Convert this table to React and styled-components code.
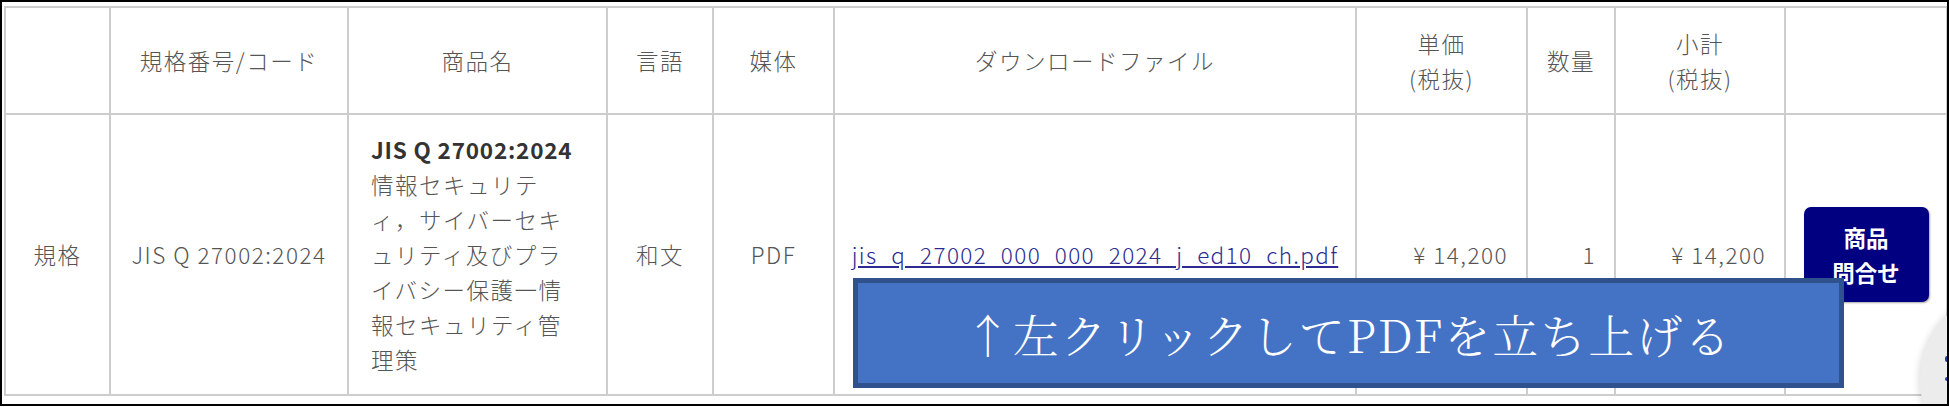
import React from "react";
import styled, { createGlobalStyle } from "styled-components";

const Global = createGlobalStyle`
  html, body { margin: 0; padding: 0; background: #fff; }
  body { font-family: "Noto Sans CJK JP", "Noto Sans", sans-serif; }
`;

const Frame = styled.div`
  position: relative;
  width: 1949px;
  height: 406px;
  box-sizing: border-box;
  border: 2px solid #000;
  padding: 4px 0 0 2px;
  overflow: hidden;
  background: #fff;
`;

const Table = styled.table`
  width: 1944px;
  border-collapse: collapse;
  table-layout: fixed;
  border: 2px solid #cdcdcd;
  font-family: "Noto Sans CJK JP", "Noto Sans", sans-serif;
  font-size: 22.5px;
  line-height: 35px;
  letter-spacing: 1.5px;
  color: #555;
`;

const Th = styled.th`
  height: 105px;
  padding: 0 18px;
  font-weight: 300;
  text-align: center;
  vertical-align: middle;
  border: 2px solid #cdcdcd;
`;

const Td = styled.td`
  padding: 17px ${(p) => (p.$pad ?? 18)}px;
  font-weight: 300;
  text-align: ${(p) => p.$align || "center"};
  vertical-align: middle;
  border: 2px solid #cdcdcd;
  line-break: normal;
`;

const Title = styled.div`
  font-weight: 700;
  color: #333;
  letter-spacing: 0.8px;
`;

const Desc = styled.div`
  line-break: normal;
`;

const FileLink = styled.a`
  color: #2b2b91;
  text-decoration: underline;
  white-space: nowrap;
  letter-spacing: 1.35px;
`;

const InquiryButton = styled.button`
  display: block;
  margin: 0 auto;
  width: 125px;
  height: 95px;
  padding: 0;
  border: none;
  border-radius: 7px;
  background: #000080;
  color: #fff;
  font-family: "Noto Sans CJK JP", "Noto Sans", sans-serif;
  font-size: 22.5px;
  line-height: 35px;
  font-weight: 700;
  box-shadow: 1px 1px 2px rgba(0, 0, 0, 0.35);
`;

const Callout = styled.div`
  position: absolute;
  left: 851px;
  top: 276px;
  width: 991px;
  height: 110px;
  box-sizing: border-box;
  background: #4472c4;
  border: 5px solid #2f528f;
  display: flex;
  align-items: center;
  justify-content: center;
  color: #fff;
  font-family: "Noto Serif CJK JP", "Liberation Serif", "Noto Sans CJK JP", serif;
  font-size: 46px;
  font-weight: 300;
  letter-spacing: 2px;
  z-index: 2;
`;

const FloatCircle = styled.div`
  position: absolute;
  left: 1918px;
  top: 288px;
  width: 180px;
  height: 180px;
  border-radius: 50%;
  background: #ececec;
  box-shadow: -2px 0 6px rgba(0, 0, 0, 0.12);
  z-index: 3;
`;

const Dot = styled.span`
  position: absolute;
  left: 25px;
  top: ${(p) => p.$top}px;
  width: 4px;
  height: ${(p) => p.$h}px;
  border-radius: 2px;
  background: #1f3f9a;
`;

const cols = [105, 238, 259, 106, 121, 522, 171, 88, 170, 162];

export default function App() {
  return (
    <>
      <Global />
      <Frame>
        <Table>
          <colgroup>
            {cols.map((w, i) => (
              <col key={i} style={{ width: w }} />
            ))}
          </colgroup>
          <thead>
            <tr>
              <Th></Th>
              <Th>規格番号/コード</Th>
              <Th>商品名</Th>
              <Th>言語</Th>
              <Th>媒体</Th>
              <Th>ダウンロードファイル</Th>
              <Th>
                単価
                <br />
                (税抜)
              </Th>
              <Th>数量</Th>
              <Th>
                小計
                <br />
                (税抜)
              </Th>
              <Th></Th>
            </tr>
          </thead>
          <tbody>
            <tr>
              <Td>規格</Td>
              <Td>JIS Q 27002:2024</Td>
              <Td $align="left" $pad={22}>
                <Title>JIS Q 27002:2024</Title>
                <Desc>情報セキュリティ，サイバーセキュリティ及びプライバシー保護一情報セキュリティ管理策</Desc>
              </Td>
              <Td>和文</Td>
              <Td>PDF</Td>
              <Td $pad={16}>
                <FileLink href="#">jis_q_27002_000_000_2024_j_ed10_ch.pdf</FileLink>
              </Td>
              <Td $align="right">¥ 14,200</Td>
              <Td $align="right">1</Td>
              <Td $align="right">¥ 14,200</Td>
              <Td $pad={0}>
                <InquiryButton>
                  商品
                  <br />
                  問合せ
                </InquiryButton>
              </Td>
            </tr>
          </tbody>
        </Table>
        <Callout>↑左クリックしてPDFを立ち上げる</Callout>
        <FloatCircle>
          <Dot $top={66} $h={6} />
          <Dot $top={87} $h={4} />
        </FloatCircle>
      </Frame>
    </>
  );
}
